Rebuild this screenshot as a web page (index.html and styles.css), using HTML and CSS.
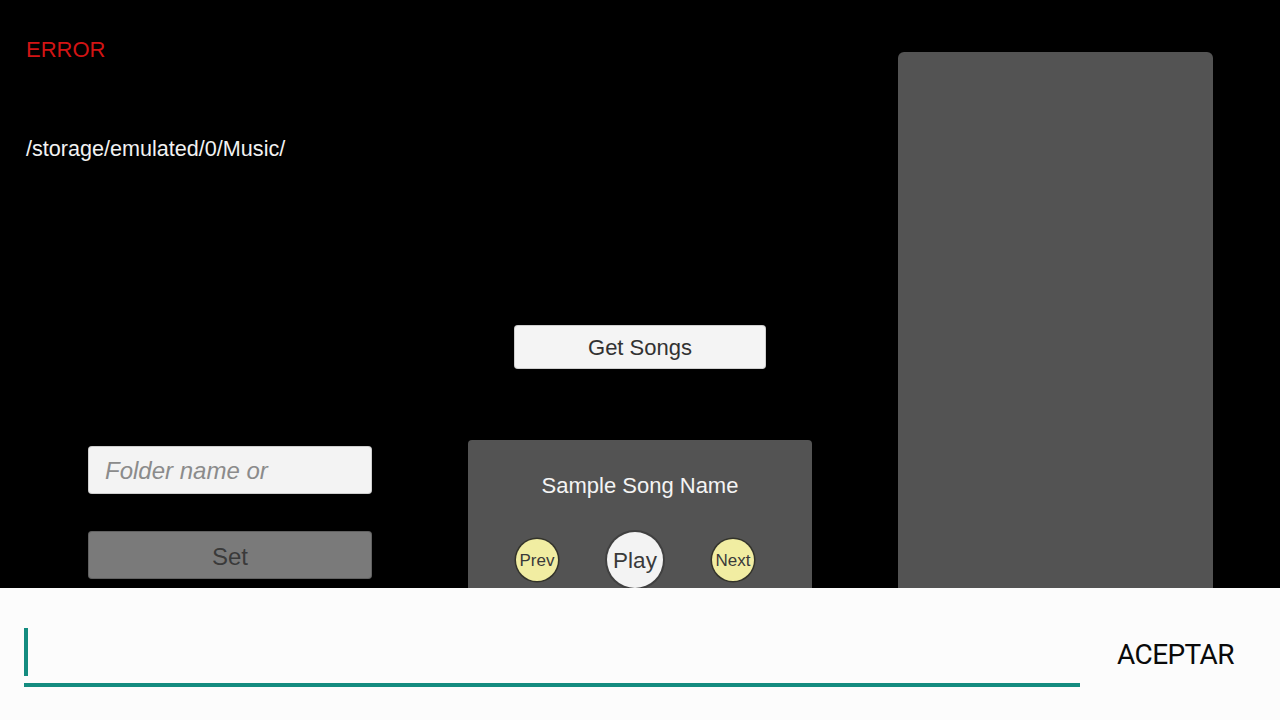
FILE: index.html
```html
<!DOCTYPE html>
<html lang="es">
<head>
  <meta charset="UTF-8">
  <meta name="viewport" content="width=device-width, initial-scale=1.0">
  <title>Music Player</title>
  <link rel="stylesheet" href="styles.css">
</head>
<body>

  <!-- escena del reproductor -->
  <main class="scene">

    <!-- columna izquierda: estado y carpeta -->
    <section class="col_left">
      <p class="error_txt">ERROR</p>
      <p class="path_txt">/storage/emulated/0/Music/</p>

      <div class="folder_form">
        <div class="folder_input">Folder name or</div>
        <button class="btn_set" type="button">Set</button>
      </div>
    </section>

    <!-- columna central: canciones -->
    <section class="col_mid">
      <button class="btn_get" type="button">Get Songs</button>

      <div class="song_panel">
        <p class="song_name">Sample Song Name</p>
        <div class="controls">
          <button class="ctrl ctrl_small" type="button">Prev</button>
          <button class="ctrl ctrl_play" type="button">Play</button>
          <button class="ctrl ctrl_small" type="button">Next</button>
        </div>
      </div>
    </section>

    <!-- lista de canciones -->
    <section class="song_list"></section>
  </main>

  <!-- dialogo de texto -->
  <footer class="input_bar">
    <div class="text_field">
      <span class="caret"></span>
      <span class="underline"></span>
    </div>
    <button class="btn_ok" type="button">ACEPTAR</button>
  </footer>

</body>
</html>
```

FILE: styles.css
```css
:root {
    --ui-font: "Liberation Sans", Arial, Helvetica, sans-serif;
    --teal: rgba(20, 140, 128, 1);
    --panel: rgba(83, 83, 83, 1);
}

* {box-sizing: border-box;}
body {margin: 0; width: 1280px; height: 720px; overflow: hidden; background: #000; font-family: var(--ui-font);}
p {margin: 0;}
button {font-family: var(--ui-font); border: 0; padding: 0; cursor: pointer;}

/* scene */
.scene {display: flex; height: 588px; overflow: hidden; background: #000;}

/* left column */
.col_left {width: 468px; flex-shrink: 0; padding: 37px 0 0 26px; display: flex; flex-direction: column;}
.col_left > * {flex-shrink: 0;}
.error_txt {font-size: 22px; line-height: 26px; color: #d21414;}
.path_txt {margin-top: 73px; font-size: 21.6px; line-height: 26px; color: #f2f2f2;}

.folder_form {margin: 284px 0 0 62px; display: flex; flex-direction: column; gap: 37px; width: 284px;}
.folder_input {height: 48px; padding: 1px 0 0 17px; background: #f3f3f3; border-radius: 4px; font-size: 24px; font-style: italic; color: #8b8b8b; line-height: 48px; box-shadow: inset 0 0 0 1px rgba(0,0,0,0.15);}
.btn_set {height: 48px; padding-top: 3px; background: #7a7a7a; border-radius: 4px; font-size: 24px; color: #3a3a3a; box-shadow: inset 0 0 0 1px rgba(0,0,0,0.2);}

/* middle column */
.col_mid {width: 344px; flex-shrink: 0; padding-top: 325px; display: flex; flex-direction: column;}
.col_mid > * {flex-shrink: 0;}
.btn_get {margin: 0 46px; height: 44px; padding-top: 2px; background: #f4f4f4; border-radius: 4px; font-size: 22px; color: #323232; box-shadow: inset 0 0 0 1px rgba(0,0,0,0.15);}

.song_panel {margin-top: 71px; height: 200px; background: var(--panel); border-radius: 4px 4px 0 0; padding-top: 33px;}
.song_name {text-align: center; font-size: 22px; line-height: 26px; color: #f4f4f4;}

.controls {margin-top: 33px; display: flex; align-items: center; gap: 49px; padding-left: 48px;}
.ctrl {border-radius: 50%; color: #3a3a3a; flex-shrink: 0; padding-top: 1px;}
.ctrl_small {width: 42px; height: 42px; background: #f1eda2; font-size: 17px; box-shadow: 0 0 0 1.5px rgba(40,40,30,0.75);}
.ctrl_play {width: 56px; height: 56px; background: #f3f3f3; font-size: 22.5px; box-shadow: 0 0 0 2px rgba(60,60,60,0.8);}

/* right list */
.song_list {margin: 52px 0 0 86px; width: 315px; height: 560px; flex-shrink: 0; background: var(--panel); border-radius: 6px 6px 0 0;}

/* input bar */
.input_bar {height: 132px; background: #fcfcfc; display: flex; align-items: flex-start; padding: 40px 0 0 24px;}
.text_field {width: 1056px; display: flex; flex-direction: column;}
.caret {width: 4px; height: 48px; background: var(--teal);}
.underline {margin-top: 7px; height: 4px; background: var(--teal);}
.btn_ok {margin: 10px 0 0 37px; background: none; font-family: Roboto, "Noto Sans", sans-serif; font-size: 28px; color: #0a0a0a; letter-spacing: -0.6px;}
```
